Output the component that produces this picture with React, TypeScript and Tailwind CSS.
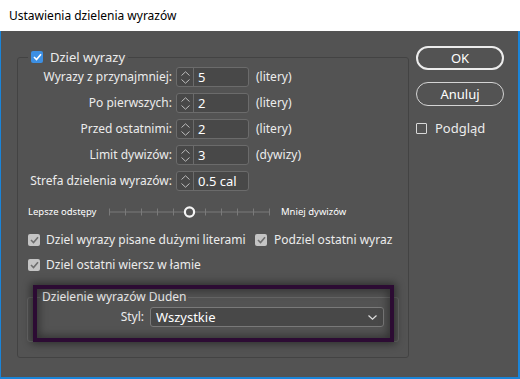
import React from "react";

const Up = () => (
  <svg width="9" height="5" viewBox="0 0 9 5">
    <polyline points="0.5,4.5 4.5,0.8 8.5,4.5" fill="none" stroke="#bdbdbd" strokeWidth="1" />
  </svg>
);

const Down = () => (
  <svg width="9" height="5" viewBox="0 0 9 5">
    <polyline points="0.5,0.5 4.5,4.2 8.5,0.5" fill="none" stroke="#bdbdbd" strokeWidth="1" />
  </svg>
);

const Spinner = ({ value }: { value: string }) => (
  <div className="flex h-[20px] w-[73px] rounded-[3px] border border-[#6b6b6b] bg-[#484848]">
    <div className="flex w-[17px] flex-col items-center justify-center gap-[3px] border-r border-[#6b6b6b]">
      <Up />
      <Down />
    </div>
    <div className="flex flex-1 items-center pl-[4px] text-[13px] leading-none text-white">{value}</div>
  </div>
);

const Row = ({ label, value, unit }: { label: string; value: string; unit?: string }) => (
  <div className="flex h-[20px] items-center">
    <span className="w-[144px] whitespace-nowrap text-right">{label}</span>
    <div className="ml-[4px]">
      <Spinner value={value} />
    </div>
    {unit && <span className="ml-[7px]">{unit}</span>}
  </div>
);

const Check = ({ on = true }: { on?: boolean }) => (
  <span className="flex h-[12px] w-[12px] items-center justify-center rounded-[2px] bg-[#c4c4c4]">
    {on && (
      <svg width="9" height="8" viewBox="0 0 9 8">
        <polyline points="1,4 3.5,6.5 8,1.2" fill="none" stroke="#6e6e6e" strokeWidth="1.6" />
      </svg>
    )}
  </span>
);

const Slider = () => {
  const ticks = Array.from({ length: 11 }, (_, i) => 0.5 + i * 16);
  return (
    <svg width="162" height="12" viewBox="0 0 162 12">
      <line x1="0" y1="6" x2="161" y2="6" stroke="#7a7a7a" strokeWidth="1" />
      {ticks.map((x) => (
        <line key={x} x1={x} y1="2.5" x2={x} y2="9.5" stroke="#7a7a7a" strokeWidth="1" />
      ))}
      <circle cx="80.5" cy="6" r="4.6" fill="#535353" stroke="#f4f4f4" strokeWidth="2.2" />
    </svg>
  );
};

export default function App() {
  return (
    <div className="flex h-[379px] w-[520px] flex-col font-['Noto_Sans',sans-serif] text-[12px] leading-[16px] text-[#ececec]">
      <div className="flex h-[31px] shrink-0 items-center bg-white pl-[9px] text-[12px] text-black">
        Ustawienia dzielenia wyrazów
      </div>
      <div className="flex flex-1 border-r-2 border-b-2 border-l border-[#1a84d8] bg-[#535353]">
        <fieldset className="mt-[18px] ml-[16px] h-[309px] w-[392px] rounded-[3px] border border-[#434343] pr-0 pb-[14px] pl-[10px]">
          <legend className="flex items-center px-[3px]">
            <span className="flex h-[12px] w-[12px] items-center justify-center rounded-[2px] bg-[#3c8fe3]">
              <svg width="9" height="8" viewBox="0 0 9 8">
                <polyline points="1,4 3.5,6.5 8,1.2" fill="none" stroke="#ffffff" strokeWidth="1.6" />
              </svg>
            </span>
            <span className="ml-[7px] text-[13px]">Dziel wyrazy</span>
          </legend>

          <div className="mt-[2px] flex flex-col gap-[6px]">
            <Row label="Wyrazy z przynajmniej:" value="5" unit="(litery)" />
            <Row label="Po pierwszych:" value="2" unit="(litery)" />
            <Row label="Przed ostatnimi:" value="2" unit="(litery)" />
            <Row label="Limit dywizów:" value="3" unit="(dywizy)" />
            <Row label="Strefa dzielenia wyrazów:" value="0.5 cal" />
          </div>

          <div className="mt-[15px] flex h-[12px] items-center text-[9.5px] text-white">
            <span className="w-[81px] whitespace-nowrap">Lepsze odstępy</span>
            <Slider />
            <span className="ml-[10px] whitespace-nowrap">Mniej dywizów</span>
          </div>

          <div className="mt-[14px] flex h-[16px] items-center">
            <div className="flex w-[227px] items-center">
              <Check />
              <span className="ml-[6px] whitespace-nowrap">Dziel wyrazy pisane dużymi literami</span>
            </div>
            <Check />
            <span className="ml-[7px] whitespace-nowrap">Podziel ostatni wyraz</span>
          </div>

          <div className="mt-[9px] flex h-[16px] items-center">
            <Check />
            <span className="ml-[6px] whitespace-nowrap">Dziel ostatni wiersz w łamie</span>
          </div>

          <div className="relative mt-[16px] mr-[9px] -ml-[1px]">
            <fieldset className="rounded-[3px] border border-[#666666] pb-[14px]">
              <legend className="ml-[12px] px-[2px]">Dzielenie wyrazów Duden</legend>
              <div className="mt-[2px] flex items-center justify-end pr-[14px]">
                <span>Styl:</span>
                <div className="ml-[6px] flex h-[20px] w-[234px] items-center justify-between rounded-[3px] border border-[#7a7a7a] bg-[#484848] pr-[6px] pl-[5px] text-[13px] text-white">
                  <span>Wszystkie</span>
                  <svg width="9" height="5" viewBox="0 0 9 5">
                    <polyline points="0.5,0.5 4.5,4.2 8.5,0.5" fill="none" stroke="#dddddd" strokeWidth="1.2" />
                  </svg>
                </div>
              </div>
            </fieldset>
            <div className="pointer-events-none absolute top-[-4px] right-[5px] bottom-0 left-[6px] border-4 border-[#2c0b33] shadow-[0_0_8px_2px_rgba(0,0,0,0.45),inset_0_0_8px_2px_rgba(0,0,0,0.4)]" />
          </div>
        </fieldset>

        <div className="ml-[7px] flex w-[88px] flex-col">
          <button className="mt-[15px] h-[24px] rounded-full border-2 border-[#ececec] text-[13px] text-white">
            OK
          </button>
          <button className="mt-[12px] h-[24px] rounded-full border border-[#d4d4d4] text-[13px] text-white">
            Anuluj
          </button>
          <div className="mt-[14px] flex h-[16px] items-center">
            <span className="h-[11px] w-[11px] rounded-[1px] border border-[#d8d8d8]" />
            <span className="ml-[8px] text-[13px]">Podgląd</span>
          </div>
        </div>
      </div>
    </div>
  );
}
